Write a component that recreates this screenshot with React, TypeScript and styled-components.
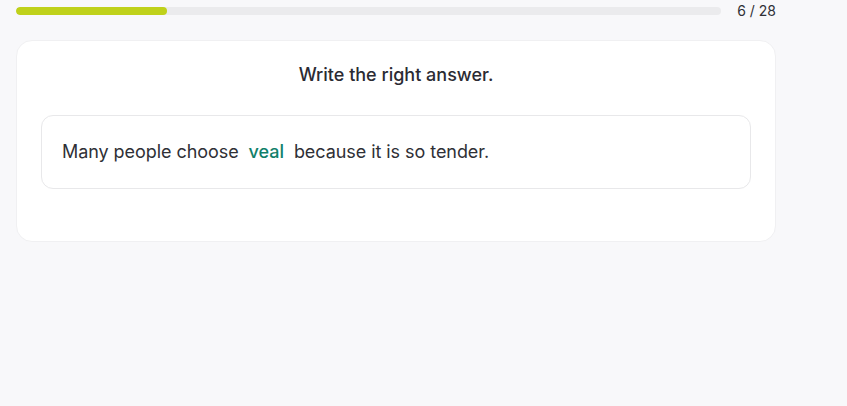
import React from "react";
import styled, { createGlobalStyle } from "styled-components";

const Global = createGlobalStyle`
  html, body { margin: 0; padding: 0; background: #f8f8fa; }
  body { font-family: Inter, "Noto Sans", sans-serif; color: #2b2b33; }
`;

const Page = styled.div`
  width: 760px;
  padding: 2px 16px 0 16px;
  display: flex;
  flex-direction: column;
  gap: 21px;
`;

const ProgressRow = styled.div`
  display: flex;
  align-items: flex-start;
  gap: 16px;
`;

const Track = styled.div`
  flex: 1;
  height: 8px;
  margin-top: 5px;
  border-radius: 4px;
  background: #ebebed;
  overflow: hidden;
`;

const Fill = styled.div`
  height: 100%;
  border-radius: 4px;
  background: #bfd11a;
`;

const Count = styled.span`
  font-size: 14px;
  line-height: 17px;
  color: #2f3036;
  white-space: nowrap;
`;

const Card = styled.section`
  background: #fff;
  border: 1px solid #f0f0f2;
  border-radius: 16px;
  padding: 21px 24px 52px 24px;
  display: flex;
  flex-direction: column;
  gap: 27px;
`;

const Title = styled.h2`
  margin: 0;
  text-align: center;
  font-size: 18px;
  font-weight: 500;
  line-height: 26px;
  color: #2b2b33;
`;

const SentenceBox = styled.div`
  border: 1px solid #e8e8ea;
  border-radius: 12px;
  padding: 23px 20px;
  font-size: 18px;
  line-height: 26px;
  letter-spacing: -0.06px;
  color: #2f3036;
`;

const Answer = styled.span`
  color: #10806a;
  font-weight: 500;
  padding: 0 5px;
`;

export default function App() {
  const done = 6;
  const total = 28;
  return (
    <>
      <Global />
      <Page>
        <ProgressRow>
          <Track>
            <Fill style={{ width: `${(done / total) * 100}%` }} />
          </Track>
          <Count>
            {done} / {total}
          </Count>
        </ProgressRow>
        <Card>
          <Title>Write the right answer.</Title>
          <SentenceBox>
            Many people choose <Answer>veal</Answer> because it is so tender.
          </SentenceBox>
        </Card>
      </Page>
    </>
  );
}
